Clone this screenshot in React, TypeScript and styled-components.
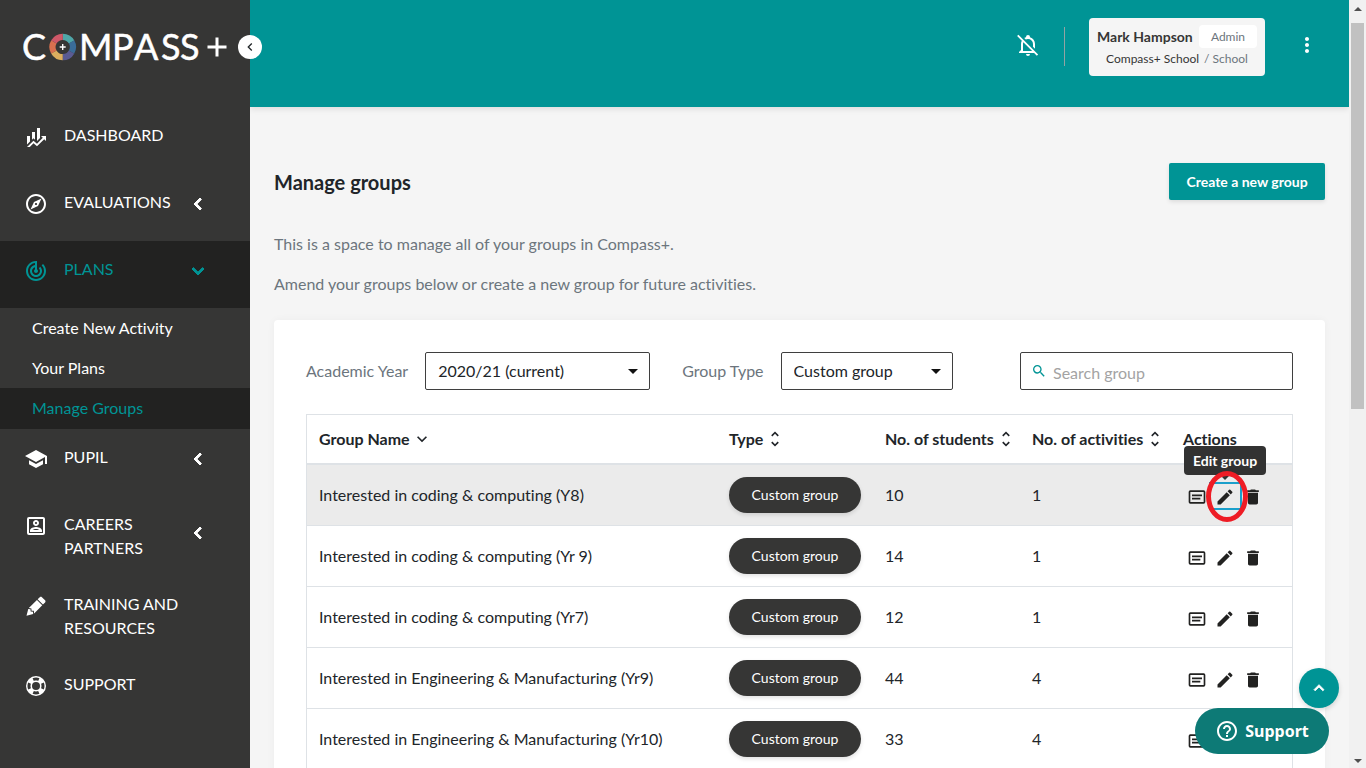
import React from "react";
import styled, { createGlobalStyle } from "styled-components";
import {
  MdChevronLeft,
  MdDelete,
  MdEdit,
  MdExpandLess,
  MdExpandMore,
  MdHelpOutline,
  MdMoreVert,
  MdOutlineExplore,
  MdOutlinePortrait,
  MdSchool,
  MdSearch,
  MdTrackChanges,
  MdUnfoldMore,
} from "react-icons/md";

const TEAL = "#009495";
const DARK = "#363635";
const DARKER = "#222221";
const INK = "#212529";
const MUTED = "#6c757d";
const LINE = "#dee2e6";

const GlobalStyle = createGlobalStyle`
  *, *::before, *::after { box-sizing: border-box; }
  body {
    margin: 0;
    background: #f5f5f5;
    color: ${INK};
    font: 400 16px/24px Lato, "Liberation Sans", sans-serif;
    font-variant-ligatures: none;
  }
  button, input, select { font: inherit; }
  a { color: inherit; text-decoration: none; }
  svg { display: block; flex: none; }
`;

const Shell = styled.div`
  display: flex;
  height: 100vh;
  overflow: hidden;
`;

/* Sidebar */

const Sidebar = styled.aside`
  position: relative;
  z-index: 2;
  flex: 0 0 250px;
  background: ${DARK};
  color: #fff;
`;

const Brand = styled.a`
  display: flex;
  align-items: center;
  height: 107px;
  padding: 0 0 13px 23px;
`;

const CollapseButton = styled.button`
  position: absolute;
  top: 35px;
  right: -12px;
  display: grid;
  place-items: center;
  width: 24px;
  height: 24px;
  padding: 0;
  border: 0;
  border-radius: 50%;
  background: #fff;
  color: ${INK};
`;

const NavItem = styled.a<{ $active?: boolean }>`
  display: flex;
  align-items: flex-start;
  min-height: 67px;
  padding: 16px 24px;
  background: ${(p) => (p.$active ? DARKER : "transparent")};
  color: ${(p) => (p.$active ? TEAL : "#fff")};
`;

const NavIcon = styled.span`
  padding-top: 2px;
  margin-right: 16px;
`;

const NavText = styled.span`
  width: 122px;
`;

const NavArrow = styled.span<{ $tall?: boolean }>`
  display: flex;
  align-items: center;
  height: ${(p) => (p.$tall ? 42 : 28)}px;
  path:not([fill="none"]) { stroke-width: 1px; }
`;

const SubMenu = styled.div`
  display: grid;
  grid-template-rows: 40px 40px 41px;
`;

const SubItem = styled.a<{ $active?: boolean }>`
  padding: 8px 32px;
  background: ${(p) => (p.$active ? DARKER : "transparent")};
  color: ${(p) => (p.$active ? TEAL : "#fff")};
`;

/* Top bar */

const Page = styled.div`
  flex: 1;
  min-width: 0;
  overflow: hidden;
`;

const TopBar = styled.header`
  display: flex;
  align-items: flex-start;
  justify-content: flex-end;
  height: 107px;
  padding: 18px 30px 0 0;
  background: ${TEAL};
  color: #fff;
  box-shadow: 0 2px 6px rgba(0, 0, 0, 0.1);
`;

const IconButton = styled.button`
  display: grid;
  place-items: center;
  padding: 0;
  border: 0;
  background: none;
  color: inherit;
`;

const TopIcon = styled(IconButton)`
  height: 54px;
`;

const Divider = styled.span`
  width: 1px;
  height: 39px;
  margin: 9px 24px 0;
  background: #93a3a3;
`;

const UserCard = styled.div`
  width: 176px;
  height: 58px;
  margin-right: 30px;
  padding: 7px 8px;
  border-radius: 4px;
  background: #f5f5f5;
  color: ${DARK};
  font-size: 14px;
  white-space: nowrap;
`;

const UserRow = styled.div`
  display: flex;
  align-items: center;
  justify-content: space-between;
  height: 23px;
  font-weight: 700;
`;

const Role = styled.span`
  width: 58px;
  border-radius: 4px;
  background: #fff;
  color: ${MUTED};
  font-size: 12px;
  font-weight: 400;
  line-height: 23px;
  text-align: center;
`;

const SchoolRow = styled.div`
  font-size: 12px;
  line-height: 22px;
  text-align: center;
`;

const Soft = styled.span`
  margin-left: 5px;
  color: ${MUTED};
`;

/* Content */

const Content = styled.main`
  padding: 56px 24px 0;
`;

const TitleRow = styled.div`
  display: flex;
  align-items: center;
  justify-content: space-between;
  margin-bottom: 32px;
`;

const Title = styled.h1`
  margin: 0;
  font-size: 20px;
  font-weight: 700;
`;

const PrimaryButton = styled.button`
  min-width: 156px;
  height: 37px;
  padding: 0 15px;
  border: 0;
  border-radius: 2px;
  background: ${TEAL};
  color: #fff;
  font-size: 14px;
  font-weight: 700;
  box-shadow: 0 2px 4px rgba(0, 0, 0, 0.1);
`;

const Intro = styled.p`
  margin: 0 0 16px;
  color: ${MUTED};
`;

const Card = styled.section`
  margin-top: 24px;
  padding: 32px;
  border-radius: 4px;
  background: #fff;
  box-shadow: 0 0 8px rgba(0, 0, 0, 0.04);
`;

const Filters = styled.form`
  display: flex;
  align-items: center;
  margin-bottom: 24px;
`;

const FilterLabel = styled.label`
  margin-right: 17px;
  color: ${MUTED};
`;

const SelectWrap = styled.span<{ $width: number }>`
  position: relative;
  width: ${(p) => p.$width}px;
  margin-right: 32px;
`;

const Select = styled.select`
  appearance: none;
  width: 100%;
  height: 38px;
  padding: 0 12px;
  border: 1px solid #3f3f3f;
  border-radius: 2px;
  background: #fff;
  color: ${INK};
`;

const Caret = styled.span`
  position: absolute;
  top: 17px;
  right: 12px;
  border: 5px solid transparent;
  border-top-color: #111;
  border-bottom: 0;
  pointer-events: none;
`;

const SearchBox = styled.label`
  display: flex;
  align-items: center;
  gap: 6px;
  width: 273px;
  height: 38px;
  margin-left: auto;
  padding: 0 10px;
  border: 1px solid #3f3f3f;
  border-radius: 2px;
  color: ${TEAL};
`;

const SearchInput = styled.input`
  flex: 1;
  min-width: 0;
  padding: 4px 0 0;
  border: 0;
  outline: 0;
  background: none;
  color: ${INK};
  &::placeholder { color: #a3a3a3; opacity: 1; }
`;

/* Table */

const Table = styled.table`
  width: 100%;
  border: 1px solid ${LINE};
  border-spacing: 0;
  table-layout: fixed;
`;

const HeadCell = styled.th<{ $width?: number }>`
  width: ${(p) => (p.$width ? `${p.$width}px` : "auto")};
  height: 50px;
  padding: 0 12px;
  border-bottom: 2px solid ${LINE};
  font-weight: 700;
  text-align: left;
  white-space: nowrap;
`;

const HeadLabel = styled.span`
  display: flex;
  align-items: center;
  gap: 2px;
`;

const Row = styled.tr<{ $hovered?: boolean }>`
  background: ${(p) => (p.$hovered ? "#ebebeb" : "#fff")};
`;

const Cell = styled.td`
  height: 61px;
  padding: 0 12px;
  border-bottom: 1px solid ${LINE};
`;

const TypeBadge = styled.span`
  display: block;
  width: 132px;
  border-radius: 18px;
  background: ${DARK};
  color: #fff;
  font-size: 14px;
  line-height: 36px;
  text-align: center;
  box-shadow: 0 2px 4px rgba(0, 0, 0, 0.12);
`;

const Actions = styled.div`
  display: flex;
  gap: 8px;
  padding: 3px 0 0 4px;
  color: ${DARKER};
`;

const EditSlot = styled.span`
  position: relative;
`;

const FocusFrame = styled.span`
  position: absolute;
  inset: -5px -7px -3px -6px;
  border: 2px solid #1a9fcb;
`;

const Tooltip = styled.span`
  position: absolute;
  bottom: 32px;
  left: 50%;
  width: 82px;
  border-radius: 4px;
  background: #323232;
  color: #fff;
  font-size: 14px;
  font-weight: 700;
  line-height: 29px;
  text-align: center;
  transform: translateX(-50%);
  &::after {
    content: "";
    position: absolute;
    top: 100%;
    left: 50%;
    margin-left: -5px;
    border: 5px solid transparent;
    border-top-color: #323232;
    border-bottom: 0;
  }
`;

const RingAnchor = styled.span`
  position: relative;
  left: -56px;
  width: 0;
`;

const HandRing = styled.span`
  position: absolute;
  top: -16px;
  left: -9px;
  width: 42px;
  height: 51px;
  border: 5px solid #ee1c25;
  border-radius: 50%;
  pointer-events: none;
`;

/* Floating controls and scroll track */

const ToTop = styled.button`
  position: fixed;
  right: 27px;
  bottom: 60px;
  z-index: 3;
  display: grid;
  place-items: center;
  width: 40px;
  height: 40px;
  padding: 0;
  border: 0;
  border-radius: 50%;
  background: ${TEAL};
  color: #fff;
  box-shadow: 0 2px 5px rgba(0, 0, 0, 0.15);
  path:not([fill="none"]) { stroke-width: 1px; }
`;

const SupportButton = styled.button`
  position: fixed;
  right: 37px;
  bottom: 14px;
  z-index: 4;
  display: flex;
  align-items: center;
  justify-content: center;
  gap: 6px;
  width: 134px;
  height: 46px;
  padding: 0;
  border: 0;
  border-radius: 23px;
  background: #0d7a76;
  color: #fff;
  font-family: "Noto Sans", sans-serif;
  font-size: 16px;
  font-weight: 700;
`;

const ScrollTrack = styled.div`
  display: flex;
  flex: 0 0 17px;
  flex-direction: column;
  align-items: center;
  padding: 7px 0 5px;
  background: #f1f1f1;
`;

const ScrollArrow = styled.span<{ $down?: boolean }>`
  border: 4px solid transparent;
  border-top: ${(p) => (p.$down ? "4px solid #505050" : "0")};
  border-bottom: ${(p) => (p.$down ? "0" : "4px solid #505050")};
`;

const ScrollThumb = styled.span`
  width: 13px;
  height: 51%;
  margin: 12px 0 auto;
  background: #c1c1c1;
`;

const glyphs = {
  finance:
    "M6,16.5L3,19.44V11H6M11,14.66L9.43,13.32L8,14.64V7H11M16,13L13,16V3H16M18.81,12.81L17,11H22V16L20.21,14.21L13,21.36L9.53,18.34L5.75,22H3L9.47,15.66L13,18.64",
  pencil:
    "M16.84,2.73C16.45,2.73 16.07,2.88 15.77,3.17L13.65,5.29L18.95,10.6L21.07,8.5C21.67,7.89 21.67,6.94 21.07,6.36L17.9,3.17C17.6,2.88 17.22,2.73 16.84,2.73M12.94,6L4.84,14.11L7.4,14.39L7.58,16.68L9.86,16.85L10.15,19.41L18.25,11.3M4.25,15.04L2.5,21.73L9.2,19.94L8.96,17.78L6.65,17.61L6.47,15.29",
  lifebuoy:
    "M19.79,15.41C20.74,13.24 20.74,10.75 19.79,8.59L17.05,9.83C17.65,11.21 17.65,12.78 17.06,14.17L19.79,15.41M15.42,4.21C13.25,3.26 10.76,3.26 8.59,4.21L9.83,6.94C11.22,6.35 12.79,6.35 14.18,6.95L15.42,4.21M4.21,8.58C3.26,10.76 3.26,13.24 4.21,15.42L6.95,14.17C6.35,12.79 6.35,11.21 6.95,9.82L4.21,8.58M8.59,19.79C10.76,20.74 13.25,20.74 15.42,19.78L14.18,17.05C12.8,17.65 11.22,17.65 9.84,17.06L8.59,19.79M12,2A10,10 0 0,1 22,12A10,10 0 0,1 12,22A10,10 0 0,1 2,12A10,10 0 0,1 12,2M12,8A4,4 0 0,0 8,12A4,4 0 0,0 12,16A4,4 0 0,0 16,12A4,4 0 0,0 12,8Z",
  card: "M20,20H4A2,2 0 0,1 2,18V6A2,2 0 0,1 4,4H20A2,2 0 0,1 22,6V18A2,2 0 0,1 20,20M4,6V18H20V6H4M6,9H18V11H6V9M6,13H16V15H6V13Z",
  bellOff:
    "M22.11,21.46L2.39,1.73L1.11,3L5.83,7.72C5.29,8.73 5,9.86 5,11V17L3,19V20H18.11L20.84,22.73L22.11,21.46M7,18V11C7,10.39 7.11,9.79 7.34,9.23L16.11,18H7M10,21H14A2,2 0 0,1 12,23A2,2 0 0,1 10,21M8.29,5.09C8.82,4.75 9.4,4.48 10,4.29C10,4.19 10,4.1 10,4A2,2 0 0,1 12,2A2,2 0 0,1 14,4C14,4.1 14,4.19 14,4.29C16.97,5.17 19,7.9 19,11V15.8L17,13.8V11A5,5 0 0,0 12,6C11.22,6 10.45,6.2 9.76,6.56L8.29,5.09Z",
};

function Glyph({ name, size = 24 }: { name: keyof typeof glyphs; size?: number }) {
  return (
    <svg width={size} height={size} viewBox="0 0 24 24" fill="currentColor" aria-hidden="true">
      <path d={glyphs[name]} />
    </svg>
  );
}

const ringColours = ["#4fa6a8", "#3a6c99", "#5a5b93", "#dcae5f", "#d9704f", "#cf5868"];

function Logo() {
  return (
    <svg width="206" height="56" viewBox="0 -10 206 56" role="img" aria-label="Compass+">
      <g fill="#fff" stroke="#fff" strokeWidth="0.5" fontFamily="Lato, sans-serif" fontSize="36">
        <text x="-1" y="31">C</text>
        <text x="56" y="31">M</text>
        <text x="89" y="31">P</text>
        <text x="111" y="31">A</text>
        <text x="138" y="31">S</text>
        <text x="157" y="31">S</text>
      </g>
      {ringColours.map((colour, i) => (
        <circle
          key={colour}
          cx="39.700"
          cy="18"
          r="10.200"
          fill="none"
          stroke={colour}
          strokeWidth="6.200"
          strokeDasharray="10.68 53.41"
          transform={`rotate(${i * 60 - 90} 39.7 18)`}
        />
      ))}
      <path d="M36.700 18h6M39.700 15v6" stroke="#fff" strokeWidth="1.4" />
      <path d="M184.500 18h19M194 8.500v19" stroke="#fff" strokeWidth="3" />
    </svg>
  );
}

const columns = [
  { label: "Group Name", icon: <MdExpandMore size={20} /> },
  { label: "Type", width: 156, icon: <MdUnfoldMore size={20} /> },
  { label: "No. of students", width: 147, icon: <MdUnfoldMore size={20} /> },
  { label: "No. of activities", width: 151, icon: <MdUnfoldMore size={20} /> },
  { label: "Actions", width: 121, icon: null },
];

const groups = [
  { name: "Interested in coding & computing (Y8)", students: 10, activities: 1 },
  { name: "Interested in coding & computing (Yr 9)", students: 14, activities: 1 },
  { name: "Interested in coding & computing (Yr7)", students: 12, activities: 1 },
  { name: "Interested in Engineering & Manufacturing (Yr9)", students: 44, activities: 4 },
  { name: "Interested in Engineering & Manufacturing (Yr10)", students: 33, activities: 4 },
];

type NavProps = {
  icon: React.ReactNode;
  label: string;
  arrow?: React.ReactNode;
  active?: boolean;
  tall?: boolean;
};

function Nav({ icon, label, arrow, active, tall }: NavProps) {
  return (
    <NavItem href="#" $active={active}>
      <NavIcon>{icon}</NavIcon>
      <NavText>{label}</NavText>
      {arrow && <NavArrow $tall={tall}>{arrow}</NavArrow>}
    </NavItem>
  );
}

export default function App() {
  const left = <MdChevronLeft size={24} />;
  return (
    <>
      <GlobalStyle />
      <Shell>
        <Sidebar>
          <Brand href="#"><Logo /></Brand>
          <CollapseButton aria-label="Collapse menu"><MdChevronLeft size={16} /></CollapseButton>
          <nav>
            <Nav icon={<Glyph name="finance" />} label="DASHBOARD" />
            <Nav icon={<MdOutlineExplore size={24} />} label="EVALUATIONS" arrow={left} />
            <Nav icon={<MdTrackChanges size={24} />} label="PLANS" arrow={<MdExpandMore size={24} />} active />
            <SubMenu>
              <SubItem href="#">Create New Activity</SubItem>
              <SubItem href="#">Your Plans</SubItem>
              <SubItem href="#" $active>Manage Groups</SubItem>
            </SubMenu>
            <Nav icon={<MdSchool size={24} />} label="PUPIL" arrow={left} />
            <Nav icon={<MdOutlinePortrait size={24} />} label="CAREERS PARTNERS" arrow={left} tall />
            <Nav icon={<Glyph name="pencil" />} label="TRAINING AND RESOURCES" />
            <Nav icon={<Glyph name="lifebuoy" />} label="SUPPORT" />
          </nav>
        </Sidebar>
        <Page>
          <TopBar>
            <TopIcon aria-label="Notifications off"><Glyph name="bellOff" /></TopIcon>
            <Divider />
            <UserCard>
              <UserRow>Mark Hampson<Role>Admin</Role></UserRow>
              <SchoolRow>Compass+ School<Soft>/ School</Soft></SchoolRow>
            </UserCard>
            <TopIcon aria-label="More options"><MdMoreVert size={24} /></TopIcon>
          </TopBar>
          <Content>
            <TitleRow>
              <Title>Manage groups</Title>
              <PrimaryButton>Create a new group</PrimaryButton>
            </TitleRow>
            <Intro>This is a space to manage all of your groups in Compass+.</Intro>
            <Intro>Amend your groups below or create a new group for future activities.</Intro>
            <Card>
              <Filters>
                <FilterLabel htmlFor="year">Academic Year</FilterLabel>
                <SelectWrap $width={225}>
                  <Select id="year"><option>2020/21 (current)</option></Select>
                  <Caret />
                </SelectWrap>
                <FilterLabel htmlFor="type">Group Type</FilterLabel>
                <SelectWrap $width={172}>
                  <Select id="type"><option>Custom group</option></Select>
                  <Caret />
                </SelectWrap>
                <SearchBox>
                  <MdSearch size={16} />
                  <SearchInput placeholder="Search group" aria-label="Search group" />
                </SearchBox>
              </Filters>
              <Table>
                <thead>
                  <tr>
                    {columns.map((c) => (
                      <HeadCell key={c.label} $width={c.width} scope="col">
                        <HeadLabel>{c.label}{c.icon}</HeadLabel>
                      </HeadCell>
                    ))}
                  </tr>
                </thead>
                <tbody>
                  {groups.map((g, i) => (
                    <Row key={g.name} $hovered={i === 0}>
                      <Cell>{g.name}</Cell>
                      <Cell><TypeBadge>Custom group</TypeBadge></Cell>
                      <Cell>{g.students}</Cell>
                      <Cell>{g.activities}</Cell>
                      <Cell>
                        <Actions>
                          <IconButton aria-label="View group"><Glyph name="card" size={20} /></IconButton>
                          <EditSlot>
                            {i === 0 && <FocusFrame />}
                            <IconButton aria-label="Edit group"><MdEdit size={20} /></IconButton>
                            {i === 0 && <Tooltip role="tooltip">Edit group</Tooltip>}
                          </EditSlot>
                          <IconButton aria-label="Delete group"><MdDelete size={20} /></IconButton>
                          {i === 0 && <RingAnchor><HandRing /></RingAnchor>}
                        </Actions>
                      </Cell>
                    </Row>
                  ))}
                </tbody>
              </Table>
            </Card>
          </Content>
        </Page>
        <ScrollTrack aria-hidden="true">
          <ScrollArrow />
          <ScrollThumb />
          <ScrollArrow $down />
        </ScrollTrack>
      </Shell>
      <ToTop aria-label="Back to top"><MdExpandLess size={20} /></ToTop>
      <SupportButton><MdHelpOutline size={24} />Support</SupportButton>
    </>
  );
}
